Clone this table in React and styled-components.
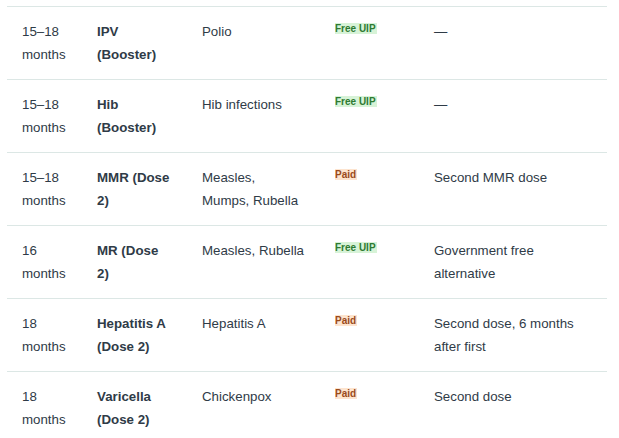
import React from "react";
import styled, { createGlobalStyle } from "styled-components";

const GlobalStyle = createGlobalStyle`
  html, body {
    margin: 0;
    padding: 0;
    background: #ffffff;
  }
  body {
    font-family: "Liberation Sans", Arial, sans-serif;
  }
`;

const Wrapper = styled.div`
  padding: 6px 0 0 7px;
`;

const Table = styled.table`
  width: 600px;
  border-collapse: collapse;
  table-layout: fixed;
  font-size: 13.3px;
  line-height: 23px;
  color: #2f3b47;
`;

const Row = styled.tr`
  border-top: 1px solid #dce7e5;
`;

const Cell = styled.td`
  width: ${props => props.w}px;
  padding: 13px 15px 13px 15px;
  vertical-align: top;
  box-sizing: border-box;
  font-weight: ${props => (props.bold ? 700 : 400)};
`;

const Badge = styled.span`
  display: inline-block;
  margin-top: 3px;
  padding: 0 1px 0 0;
  font-size: 10px;
  line-height: 11px;
  font-weight: 700;
  vertical-align: top;
  color: ${props => (props.paid ? "#9a4a1c" : "#2e7a32")};
  background: ${props => (props.paid ? "#fde4cf" : "#d7f3d7")};
`;

const rows = [
  { age: "15–18 months", name: "IPV (Booster)", disease: "Polio", paid: false, note: "—" },
  { age: "15–18 months", name: "Hib (Booster)", disease: "Hib infections", paid: false, note: "—" },
  { age: "15–18 months", name: "MMR (Dose 2)", disease: "Measles, Mumps, Rubella", paid: true, note: "Second MMR dose" },
  { age: "16 months", name: "MR (Dose 2)", disease: "Measles, Rubella", paid: false, note: "Government free alternative" },
  { age: "18 months", name: "Hepatitis A (Dose 2)", disease: "Hepatitis A", paid: true, note: "Second dose, 6 months after first" },
  { age: "18 months", name: "Varicella (Dose 2)", disease: "Chickenpox", paid: true, note: "Second dose" },
];

export default function App() {
  return (
    <>
      <GlobalStyle />
      <Wrapper>
        <Table>
          <tbody>
            {rows.map((r, i) => (
              <Row key={i}>
                <Cell w={75}>{r.age}</Cell>
                <Cell w={105} bold>{r.name}</Cell>
                <Cell w={133}>{r.disease}</Cell>
                <Cell w={99}>
                  <Badge paid={r.paid}>{r.paid ? "Paid" : "Free UIP"}</Badge>
                </Cell>
                <Cell w={188}>{r.note}</Cell>
              </Row>
            ))}
          </tbody>
        </Table>
      </Wrapper>
    </>
  );
}
